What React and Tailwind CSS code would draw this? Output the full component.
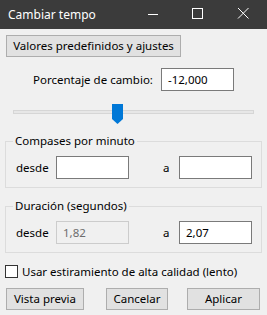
const font = { fontFamily: '"Segoe UI", "Noto Sans", sans-serif' };

const Btn = ({ label, className }) => (
  <button
    className={
      "h-[22px] border border-[#adadad] bg-[#e1e1e1] text-[11.5px] leading-none text-black " +
      className
    }
  >
    {label}
  </button>
);

const Field = ({ value = "", disabled = false }) => (
  <div
    className={
      disabled
        ? "h-[23px] w-[73px] border border-[#cccccc] bg-[#f0f0f0] pl-[6px] text-[11.5px] leading-[21px] text-[#6d6d6d]"
        : "h-[23px] w-[73px] border border-[#7a7a7a] bg-white pl-[6px] text-[11.5px] leading-[21px] text-black"
    }
  >
    {value}
  </div>
);

const Group = ({ title, from, to, fromDisabled }) => (
  <fieldset className="w-[256px] border border-[#dcdcdc] px-[9px] pt-[7px] pb-[8px]">
    <legend className="ml-[-2px] px-[2px] text-[11.5px] leading-[16px] text-black">
      {title}
    </legend>
    <div className="flex items-center text-[11.5px] text-black">
      <span className="w-[41px] pl-[1px]">desde</span>
      <Field value={from} disabled={fromDisabled} />
      <span className="ml-[34px] w-[16px]">a</span>
      <Field value={to} />
    </div>
  </fieldset>
);

export default function App() {
  return (
    <div className="flex h-[315px] w-[267px] flex-col bg-[#f0f0f0]" style={font}>
      <div className="flex h-[29px] items-center bg-[#3b3b3b] text-white">
        <span className="pl-[8px] text-[12px]">Cambiar tempo</span>
        <div className="ml-auto flex items-center">
          <svg width="46" height="29" viewBox="0 0 46 29">
            <path d="M19 14.5h10" stroke="#fff" strokeWidth="1" />
          </svg>
          <svg width="46" height="29" viewBox="0 0 46 29">
            <rect x="17.5" y="8.5" width="10" height="10" fill="none" stroke="#fff" />
          </svg>
          <svg width="46" height="29" viewBox="0 0 46 29">
            <path d="M17 8l10.5 10.5M27.5 8L17 18.5" stroke="#fff" strokeWidth="1" />
          </svg>
        </div>
      </div>

      <div className="flex flex-col px-[5px] pt-[6px]">
        <Btn label="Valores predefinidos y ajustes" className="ml-[1px] w-[175px]" />

        <div className="mt-[11px] flex items-center text-[11.5px] text-black">
          <span className="w-[156px] pl-[28px]">Porcentaje de cambio:</span>
          <Field value="-12,000" />
        </div>

        <div className="relative mt-[13px] ml-[8px] h-[20px] w-[241px]">
          <div className="mt-[6px] h-[4px] w-full border border-[#d6d6d6] bg-[#e7e7e7]" />
          <svg
            className="absolute top-0 left-[99px]"
            width="12"
            height="20"
            viewBox="0 0 12 20"
          >
            <path d="M0 0h11v15l-5.5 5L0 15z" fill="#0078d7" />
          </svg>
        </div>

        <div className="mt-[9px]">
          <Group title="Compases por minuto" />
        </div>
        <div className="mt-[10px]">
          <Group title="Duración (segundos)" from="1,82" to="2,07" fromDisabled />
        </div>

        <label className="mt-[12px] flex items-center text-[11.5px] text-black">
          <span className="h-[13px] w-[13px] border border-[#333] bg-white" />
          <span className="ml-[4px] leading-[13px]">Usar estiramiento de alta calidad (lento)</span>
        </label>

        <div className="mt-[10px] flex">
          <Btn label="Vista previa" className="ml-[1px] w-[78px]" />
          <Btn label="Cancelar" className="ml-[22px] w-[62px]" />
          <Btn label="Aplicar" className="ml-[19px] w-[73px]" />
        </div>
      </div>
    </div>
  );
}
